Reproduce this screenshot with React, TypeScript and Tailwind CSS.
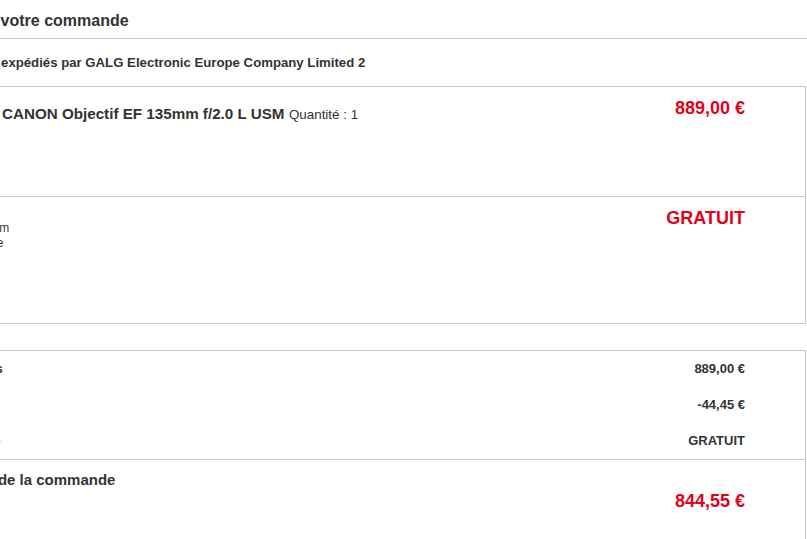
const red = "text-[#e2001a]";

const summaryRows = [
  { label: "Sous-total des articles", value: "889,00 €" },
  { label: "Remise", value: "-44,45 €" },
];

export default function App() {
  return (
    <div className="w-[807px] h-[539px] overflow-hidden bg-white text-[#333] font-['Liberation_Sans',Arial,sans-serif]">
      {/* page title */}
      <div className="h-[39px] border-b border-[#c8c8c8] pt-[11px]">
        <h2 className="ml-[-123px] whitespace-nowrap text-[16px] font-bold leading-5">
          Récapitulatif de votre commande
        </h2>
      </div>

      <div className="h-[47px] pt-[16px]">
        <p className="ml-[-51px] whitespace-nowrap text-[13.2px] font-bold leading-4">
          Articles expédiés par GALG Electronic Europe Company Limited 2
        </p>
      </div>

      {/* items + shipping */}
      <div className="ml-[-150px] mr-[1px] border border-[#c8c8c8]">
        <div className="flex h-[110px] items-start justify-between border-b border-[#c8c8c8] pl-[151px] pr-[60px]">
          <p className="whitespace-nowrap pt-[17px] leading-5">
            <span className="text-[15.2px] font-bold">
              CANON Objectif EF 135mm f/2.0 L USM
            </span>{" "}
            <span className="text-[13.4px]">Quantité : 1</span>
          </p>
          <span className={`pt-[10px] text-[18px] font-bold leading-[22px] ${red}`}>
            889,00 €
          </span>
        </div>
        <div className="flex h-[126px] items-start justify-between pl-[59px] pr-[60px]">
          <div className="whitespace-nowrap pt-[24px] text-[12px] leading-[15px] text-[#3a3a3a]">
            <p>Livraison Premium</p>
            <p className="pl-[2px]">Livraison gratuite</p>
          </div>
          <span className={`pt-[10px] text-[18px] font-bold leading-[22px] ${red}`}>
            GRATUIT
          </span>
        </div>
      </div>

      {/* totals */}
      <div className="ml-[-150px] mr-[1px] mt-[26px] h-[200px] border border-[#c8c8c8]">
        {summaryRows.map((row) => (
          <div
            key={row.label}
            className="flex h-[36px] items-center justify-between pl-[13px] pr-[60px] text-[13px] font-bold"
          >
            <span className="whitespace-nowrap">{row.label}</span>
            <span>{row.value}</span>
          </div>
        ))}
        <div className="flex h-[36px] items-center justify-between pl-[13px] pr-[60px] text-[13px]">
          <span className="whitespace-nowrap">
            <span className="font-bold">Livraison en </span>
            <span className="text-[#00c0f0]">Colissimo</span>
          </span>
          <span className="font-bold">GRATUIT</span>
        </div>
        <div className="flex items-start justify-between border-t border-[#c8c8c8] pl-[108px] pr-[60px]">
          <h3 className="whitespace-nowrap pt-[10px] text-[15px] font-bold leading-5">
            Total de la commande
          </h3>
          <span className={`pt-[30px] text-[18px] font-bold leading-[22px] ${red}`}>
            844,55 €
          </span>
        </div>
      </div>
    </div>
  );
}
